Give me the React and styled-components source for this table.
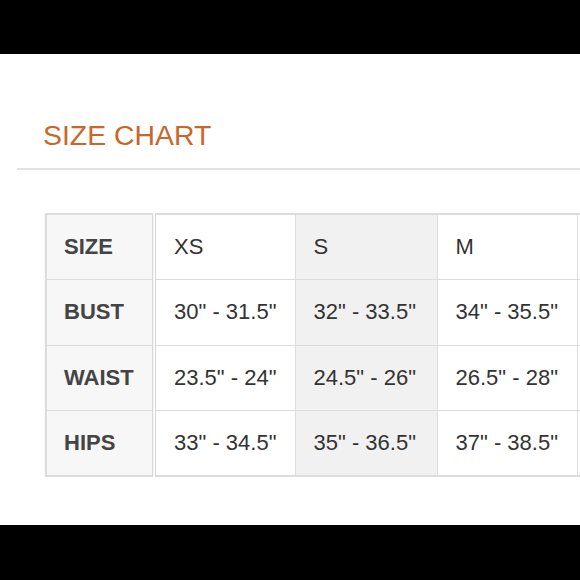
import React from 'react';
import styled, { createGlobalStyle } from 'styled-components';

const GlobalStyle = createGlobalStyle`
  html, body {
    margin: 0;
    padding: 0;
    background: #000;
  }

  body {
    font-family: "Liberation Sans", Arial, sans-serif;
  }
`;

const Screen = styled.div`
  width: 580px;
  height: 580px;
  display: flex;
  flex-direction: column;
  background: #000;
  overflow: hidden;
`;

const Bar = styled.div`
  height: ${props => props.height}px;
  flex-shrink: 0;
  background: #000;
`;

const Content = styled.div`
  flex: 1;
  background: #fff;
  padding-top: 64px;
  overflow: hidden;
`;

const Title = styled.h1`
  margin: 0 0 16px 43px;
  font-size: 28.4px;
  line-height: 34px;
  font-weight: normal;
  color: #c8662c;
`;

const Rule = styled.hr`
  margin: 0 0 43px 17px;
  border: 0;
  height: 2px;
  background: #e2e2e2;
`;

const TableWrap = styled.div`
  padding-left: 45px;
  overflow: hidden;
`;

const Table = styled.table`
  border-collapse: collapse;
  table-layout: fixed;
  width: 671px;
  border: 2px solid #dcdcdc;
  box-shadow: 0 1px 2px rgba(0, 0, 0, 0.08);

  tr {
    height: 65.5px;
  }
`;

const Cell = styled.td`
  box-sizing: border-box;
  padding: 0 0 0 18px;
  border: 1px solid #dcdcdc;
  font-size: 22px;
  color: #333;
  white-space: nowrap;
  vertical-align: middle;
  background: ${props => (props.shaded ? '#f1f1f1' : '#fff')};
`;

const HeadCell = styled(Cell)`
  padding-left: 17px;
  font-weight: bold;
  color: #444;
  background: #f7f7f7;
  border-right: 4px double #d6d6d6;
`;

const sizes = ['XS', 'S', 'M', ''];

const rows = [
  { label: 'BUST', values: ['30" - 31.5"', '32" - 33.5"', '34" - 35.5"', ''] },
  { label: 'WAIST', values: ['23.5" - 24"', '24.5" - 26"', '26.5" - 28"', ''] },
  { label: 'HIPS', values: ['33" - 34.5"', '35" - 36.5"', '37" - 38.5"', ''] },
];

const widths = [108, 141, 142, 140, 140];

export default function App() {
  return (
    <Screen>
      <GlobalStyle />
      <Bar height={54} />
      <Content>
        <Title>SIZE CHART</Title>
        <Rule />
        <TableWrap>
          <Table>
            <colgroup>
              {widths.map((w, i) => (
                <col key={i} style={{ width: w }} />
              ))}
            </colgroup>
            <tbody>
              <tr>
                <HeadCell>SIZE</HeadCell>
                {sizes.map((s, i) => (
                  <Cell key={i} shaded={i === 1}>{s}</Cell>
                ))}
              </tr>
              {rows.map(row => (
                <tr key={row.label}>
                  <HeadCell>{row.label}</HeadCell>
                  {row.values.map((v, i) => (
                    <Cell key={i} shaded={i === 1}>{v}</Cell>
                  ))}
                </tr>
              ))}
            </tbody>
          </Table>
        </TableWrap>
      </Content>
      <Bar height={55} />
    </Screen>
  );
}
